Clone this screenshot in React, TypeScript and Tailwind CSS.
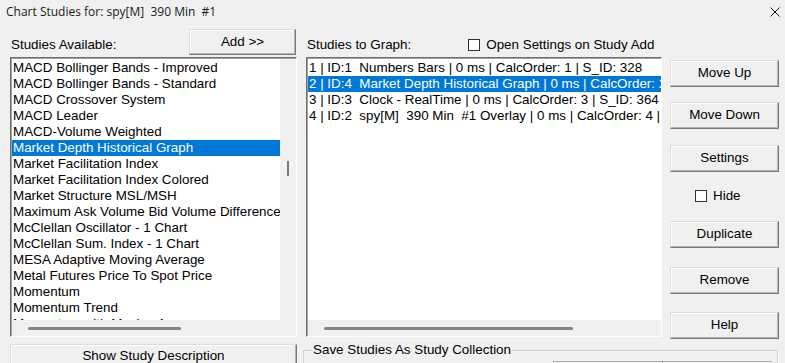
import React from "react";

const available = [
  "MACD Bollinger Bands - Improved",
  "MACD Bollinger Bands - Standard",
  "MACD Crossover System",
  "MACD Leader",
  "MACD-Volume Weighted",
  "Market Depth Historical Graph",
  "Market Facilitation Index",
  "Market Facilitation Index Colored",
  "Market Structure MSL/MSH",
  "Maximum Ask Volume Bid Volume Difference Bars",
  "McClellan Oscillator - 1 Chart",
  "McClellan Sum. Index - 1 Chart",
  "MESA Adaptive Moving Average",
  "Metal Futures Price To Spot Price",
  "Momentum",
  "Momentum Trend",
  "Momentum with Moving Average",
];

const graphed = [
  "1 | ID:1  Numbers Bars | 0 ms | CalcOrder: 1 | S_ID: 328",
  "2 | ID:4  Market Depth Historical Graph | 0 ms | CalcOrder: 2 | S_ID: 1",
  "3 | ID:3  Clock - RealTime | 0 ms | CalcOrder: 3 | S_ID: 364",
  "4 | ID:2  spy[M]  390 Min  #1 Overlay | 0 ms | CalcOrder: 4 | S_ID: 0",
];

const btn =
  "flex items-center justify-center bg-[#f0f0f0] border border-[#dcdcdc] border-r-[#7a7a7a] border-b-[#7a7a7a] shadow-[inset_-1px_-1px_0_#b4b4b4,inset_1px_1px_0_#ffffff] text-[13.4px] text-black";

function Button({ label, className }: { label: string; className: string }) {
  return (
    <button type="button" className={`${btn} ${className}`}>
      {label}
    </button>
  );
}

function Check({ label, className }: { label: string; className: string }) {
  return (
    <label className={`flex items-center gap-[6px] ${className}`}>
      <span className="w-[12px] h-[12px] bg-white border border-[#333333] shrink-0" />
      <span className="text-[13.4px] leading-[16px]">{label}</span>
    </label>
  );
}

function ListBox({
  items,
  selected,
  vScroll,
  hThumb,
  className,
}: {
  items: string[];
  selected: number;
  vScroll: boolean;
  hThumb: [number, number];
  className: string;
}) {
  return (
    <div
      className={`flex flex-col h-[280px] border-l border-t border-[#6e6e6e] border-r border-b border-r-[#ffffff] border-b-[#ffffff] shadow-[inset_1px_1px_0_#a0a0a0] pl-[1px] pt-[1px] ${className}`}
    >
      <div className="flex flex-1 min-h-0">
        <div className="flex-1 min-w-0 bg-white overflow-hidden pt-[1px]">
          {items.map((it, i) => (
            <div
              key={it}
              className={`h-[16px] leading-[16px] pl-[1px] whitespace-pre text-[13.4px] ${
                i === selected ? "bg-[#0078d7] text-white" : "text-black"
              }`}
            >
              {it}
            </div>
          ))}
        </div>
        {vScroll && (
          <div className="w-[16px] bg-[#f0f0f0] flex justify-center pt-[102px]">
            <div className="w-[2px] h-[15px] bg-[#7a7a7a]" />
          </div>
        )}
      </div>
      <div className="h-[16px] bg-[#f0f0f0] flex items-center">
        <div
          className="h-[3px] bg-[#858585] rounded-full"
          style={{ marginLeft: hThumb[0], width: hThumb[1] }}
        />
      </div>
    </div>
  );
}

export default function App() {
  return (
    <div className="w-[785px] h-[363px] overflow-hidden bg-[#f0f0f0] text-black font-['Liberation_Sans',Arial,sans-serif]">
      <div className="h-[24px] flex items-center justify-between pl-[6px] pr-[5px]">
        <span className="font-['Open_Sans',sans-serif] text-[12px] text-[#1a1a1a] whitespace-pre">
          Chart Studies for: spy[M]  390 Min  #1
        </span>
        <svg width="10" height="10" viewBox="0 0 10 10">
          <path d="M0.5 0.5 L9.5 9.5 M9.5 0.5 L0.5 9.5" stroke="#111" strokeWidth="1" />
        </svg>
      </div>

      <div className="flex">
        <div className="ml-[10px] w-[287px] flex flex-col">
          <div className="h-[33px] flex items-start justify-between">
            <span className="mt-[13px] ml-[1px] text-[13.4px] leading-[16px]">Studies Available:</span>
            <Button label="Add >>" className="mt-[5px] mr-[1px] w-[107px] h-[26px]" />
          </div>
          <ListBox items={available} selected={5} vScroll hThumb={[16, 153]} className="w-[287px]" />
          <Button label="Show Study Description" className="mt-[7px] w-[287px] h-[26px] pb-[2px]" />
        </div>

        <div className="ml-[6px] w-[476px] flex flex-col">
          <div className="h-[33px] flex items-start">
            <span className="mt-[13px] ml-[4px] text-[13.4px] leading-[16px]">Studies to Graph:</span>
            <Check label="Open Settings on Study Add" className="mt-[13px] ml-[57px]" />
          </div>
          <div className="flex">
            <ListBox items={graphed} selected={1} vScroll={false} hThumb={[16, 249]} className="ml-[3px] w-[356px]" />
            <div className="ml-[8px] w-[109px] flex flex-col">
              <Button label="Move Up" className="mt-[3px] h-[27px]" />
              <Button label="Move Down" className="mt-[15px] h-[27px]" />
              <Button label="Settings" className="mt-[16px] h-[27px]" />
              <Check label="Hide" className="mt-[16px] ml-[25px]" />
              <Button label="Duplicate" className="mt-[17px] h-[27px]" />
              <Button label="Remove" className="mt-[19px] h-[27px]" />
              <Button label="Help" className="mt-[18px] h-[27px]" />
            </div>
          </div>
          <fieldset className="mt-[3px] mr-[1px] h-[40px] border border-[#d5d5d5] shadow-[1px_1px_0_#ffffff] pl-[8px]">
            <legend className="px-[1px] text-[13.4px] leading-[16px]">Save Studies As Study Collection</legend>
            <div className="flex mt-[3px] ml-[241px]">
              <div className="w-[109px] h-[10px] border-l border-t border-[#b0b0b0]" />
              <div className="w-[110px] h-[10px] border-l border-t border-[#b0b0b0]" />
            </div>
          </fieldset>
        </div>
      </div>
    </div>
  );
}
